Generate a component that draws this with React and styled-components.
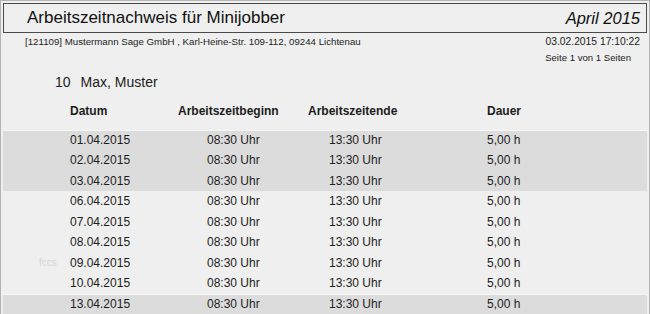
import React from "react";
import styled, { createGlobalStyle } from "styled-components";

const Global = createGlobalStyle`
  html, body { margin: 0; padding: 0; background: #efefef; }
  body { font-family: "Liberation Sans", Arial, sans-serif; color: #1c1c1c; }
`;

const Frame = styled.div`
  box-sizing: border-box;
  width: 650px;
  height: 314px;
  overflow: hidden;
  background: #efefef;
  border: 1px solid #b4b4b4;
  border-bottom: none;
  padding: 2px 2px 0 2px;
  display: flex;
  flex-direction: column;
`;

const TitleBox = styled.header`
  box-sizing: border-box;
  height: 32px;
  border: 1px solid #4a4a4a;
  display: flex;
  align-items: center;
  justify-content: space-between;
  padding: 0 6px 0 23px;
  color: #111;
`;

const Title = styled.h1`
  margin: 0;
  font-size: 17px;
  font-weight: normal;
  line-height: 20px;
`;

const Period = styled.span`
  font-size: 16.5px;
  font-style: italic;
  line-height: 20px;
`;

const Info = styled.div`
  margin-top: 3px;
  display: flex;
  justify-content: space-between;
  padding: 0 7px 0 22px;
  font-size: 9.7px;
  line-height: 12px;
`;

const Meta = styled.div`
  display: flex;
  flex-direction: column;
  align-items: flex-end;
  gap: 4px;
  font-size: 10.3px;
`;

const MetaLine = styled.span`
  padding-right: ${(p) => p.$inset || 0}px;
  font-size: ${(p) => p.$size || 10.3}px;
`;

const Employee = styled.div`
  margin-top: 10px;
  padding-left: 52px;
  display: flex;
  gap: 10px;
  font-size: 14px;
  line-height: 16px;
`;

const Grid = styled.div`
  display: grid;
  grid-template-columns: 67px 108px 130px 179px 1fr;
  align-items: center;
`;

const HeaderRow = styled(Grid)`
  margin-top: 14px;
  height: 14px;
  font-size: 12px;
  font-weight: bold;
`;

const Table = styled.div`
  margin-top: 12px;
  display: flex;
  flex-direction: column;
`;

const Row = styled(Grid)`
  height: 20.5px;
  font-size: 12px;
  background: ${(p) => (p.$shade ? "#dcdcdc" : "transparent")};
  box-shadow: ${(p) => (p.$first ? "inset 0 1px 0 #f6f6f6" : "none")};
`;

const Cell = styled.span`
  padding-left: ${(p) => p.$indent || 0}px;
  white-space: nowrap;
`;

const Watermark = styled.span`
  padding-left: 36px;
  font-size: 10px;
  color: #d6d6d6;
`;

const rows = [
  { d: "01.04.2015", shade: true, first: true },
  { d: "02.04.2015", shade: true },
  { d: "03.04.2015", shade: true },
  { d: "06.04.2015" },
  { d: "07.04.2015" },
  { d: "08.04.2015" },
  { d: "09.04.2015", mark: "fccs" },
  { d: "10.04.2015" },
  { d: "13.04.2015", shade: true, first: true },
];

export default function App() {
  return (
    <>
      <Global />
      <Frame>
        <TitleBox>
          <Title>Arbeitszeitnachweis für Minijobber</Title>
          <Period>April 2015</Period>
        </TitleBox>
        <Info>
          <span>[121109] Mustermann Sage GmbH , Karl-Heine-Str. 109-112, 09244 Lichtenau</span>
          <Meta>
            <MetaLine>03.02.2015 17:10:22</MetaLine>
            <MetaLine $inset={9} $size={9.6}>Seite 1 von 1 Seiten</MetaLine>
          </Meta>
        </Info>
        <Employee>
          <span>10</span>
          <span>Max, Muster</span>
        </Employee>
        <HeaderRow>
          <span />
          <Cell>Datum</Cell>
          <Cell>Arbeitszeitbeginn</Cell>
          <Cell>Arbeitszeitende</Cell>
          <Cell>Dauer</Cell>
        </HeaderRow>
        <Table>
          {rows.map((r) => (
            <Row key={r.d} $shade={r.shade} $first={r.first}>
              {r.mark ? <Watermark>{r.mark}</Watermark> : <span />}
              <Cell>{r.d}</Cell>
              <Cell $indent={29}>08:30 Uhr</Cell>
              <Cell $indent={21}>13:30 Uhr</Cell>
              <Cell>5,00 h</Cell>
            </Row>
          ))}
        </Table>
      </Frame>
    </>
  );
}
